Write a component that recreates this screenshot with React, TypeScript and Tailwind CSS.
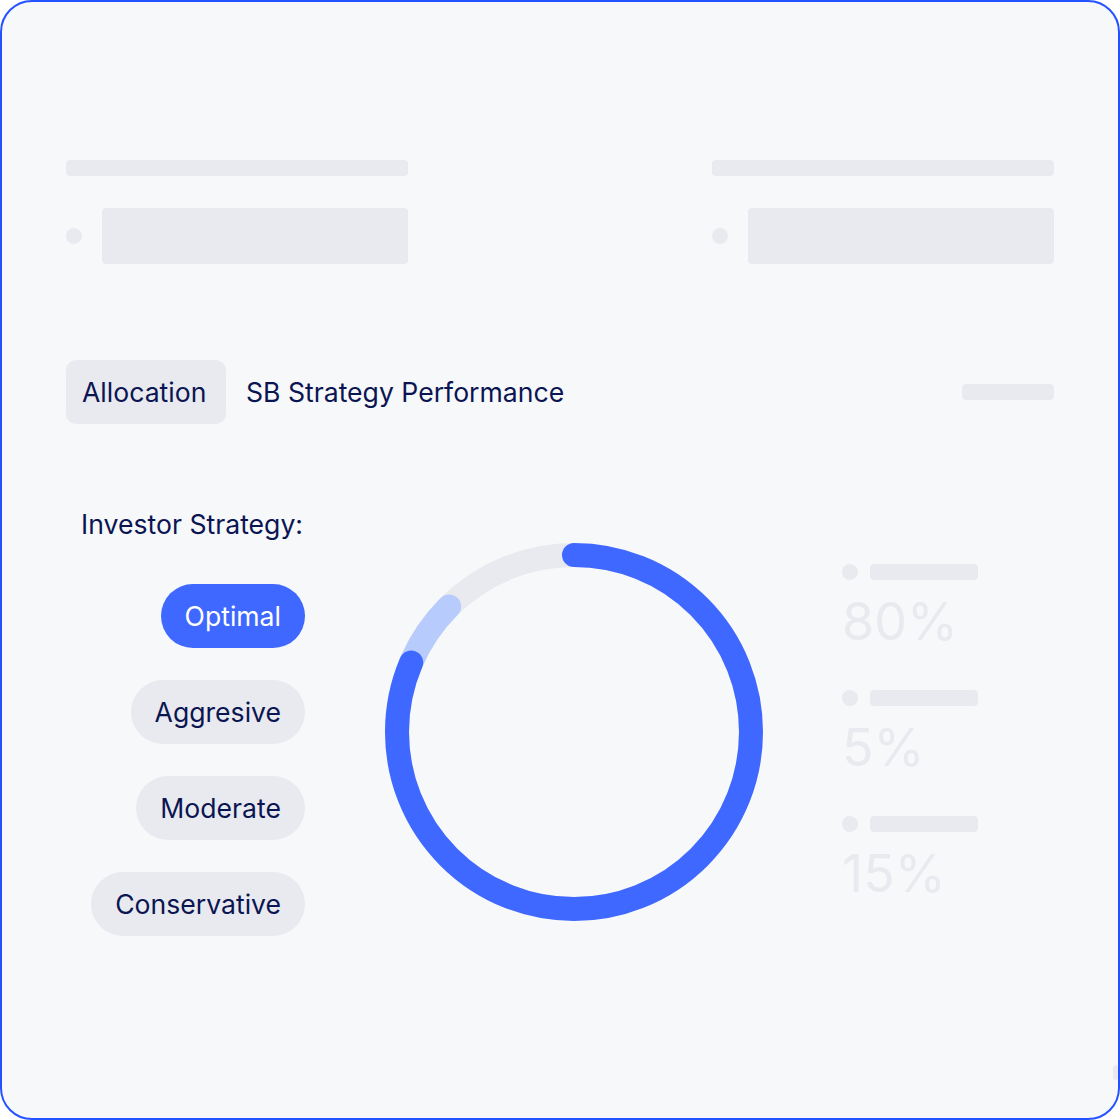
import React from "react";

const NAVY = "text-[#0b1552]";

function Donut() {
  const r = 177;
  const c = 2 * Math.PI * r;
  const blue = 293 / 360;
  const light = 22 / 360;
  return (
    <svg width="380" height="380" viewBox="0 0 380 380" className="block">
      <circle cx="190" cy="190" r={r} fill="none" stroke="#e9eaef" strokeWidth="24" />
      <circle
        cx="190"
        cy="190"
        r={r}
        fill="none"
        stroke="#b7cbfc"
        strokeWidth="24"
        strokeLinecap="round"
        strokeDasharray={`${c * light} ${c}`}
        strokeDashoffset={-c * blue}
        transform="rotate(-90 190 190)"
      />
      <circle
        cx="190"
        cy="190"
        r={r}
        fill="none"
        stroke="#3e68ff"
        strokeWidth="24"
        strokeLinecap="round"
        strokeDasharray={`${c * blue} ${c}`}
        transform="rotate(-90 190 190)"
      />
    </svg>
  );
}

function Pill({ label, active }: { label: string; active?: boolean }) {
  return (
    <div
      className={
        active
          ? "h-16 px-6 rounded-full bg-[#3e68ff] text-white flex items-center text-[26.6px] leading-8"
          : "h-16 px-6 rounded-full bg-[#e9eaef] text-[#0b1552] flex items-center text-[26.6px] leading-8"
      }
    >
      {label}
    </div>
  );
}

function TopCol() {
  return (
    <div className="w-[342px] flex flex-col">
      <div className="h-4 rounded bg-[#e9eaef]" />
      <div className="mt-8 flex items-center gap-5">
        <div className="w-4 h-4 rounded-full bg-[#e9eaef]" />
        <div className="flex-1 h-14 rounded bg-[#e9eaef]" />
      </div>
    </div>
  );
}

function LegendItem({ value }: { value: string }) {
  return (
    <div className="flex flex-col gap-4">
      <div className="flex items-center gap-3">
        <div className="w-4 h-4 rounded-full bg-[#e9eaef]" />
        <div className="w-[108px] h-4 rounded bg-[#e9eaef]" />
      </div>
      <div className="text-[52px] leading-[52px] text-[#e9eaef]">{value}</div>
    </div>
  );
}

export default function App() {
  return (
    <div
      className="relative w-[1120px] h-[1120px] border-2 border-[#2552ff] rounded-[32px] bg-[#f7f8fa] px-[64px] pt-[158px] overflow-hidden"
      style={{ fontFamily: "Inter, 'Noto Sans', sans-serif" }}
    >
      <div className="flex justify-between">
        <TopCol />
        <TopCol />
      </div>

      <div className="mt-24 flex items-center h-16">
        <div className={`h-16 w-[160px] px-4 rounded-[10px] bg-[#e9eaef] flex items-center text-[26.6px] leading-8 ${NAVY}`}>
          Allocation
        </div>
        <div className={`ml-5 text-[26.6px] leading-8 ${NAVY}`}>SB Strategy Performance</div>
        <div className="ml-auto w-[92px] h-4 rounded bg-[#e9eaef]" />
      </div>

      <div className="mt-[84px] flex items-start">
        <div className="w-[239px] flex flex-col items-end">
          <div className={`text-[26.6px] leading-8 ${NAVY} pr-[2px]`}>Investor Strategy:</div>
          <div className="mt-11 flex flex-col items-end gap-8">
            <Pill label="Optimal" active />
            <Pill label="Aggresive" />
            <Pill label="Moderate" />
            <Pill label="Conservative" />
          </div>
        </div>
        <div className="ml-[79px] mt-[34px]">
          <Donut />
        </div>
        <div className="ml-[78px] mt-[56px] flex flex-col gap-[42px]">
          <LegendItem value="80%" />
          <LegendItem value="5%" />
          <LegendItem value="15%" />
        </div>
      </div>

      <div className="absolute right-0 bottom-[38px] w-[5px] h-[15px] rounded bg-[#e9eaef]" />
    </div>
  );
}
